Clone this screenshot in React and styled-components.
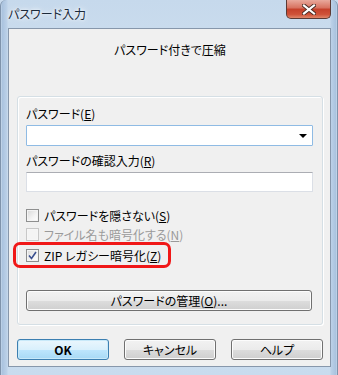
import React from 'react';
import styled, { createGlobalStyle } from 'styled-components';

const Global = createGlobalStyle`
  html, body { margin: 0; padding: 0; background: #c9dbee; }
  body {
    font-family: "Noto Sans CJK JP", "Noto Sans", sans-serif;
    font-size: 12px;
    font-feature-settings: "palt";
    color: #000;
  }
`;

function Checkbox({ checked, disabled }) {
  return (
    <Box disabled={disabled}>
      {checked && (
        <svg width="9" height="9" viewBox="0 0 9 9">
          <path d="M1 4.5 L3.5 7.5 L8 1" fill="none" stroke="#3a4f8f" strokeWidth="1.6" />
        </svg>
      )}
    </Box>
  );
}

export default function App() {
  return (
    <>
      <Global />
      <Window>
        <TitleBar>
          <Title>パスワード入力</Title>
          <CloseButton>
            <svg width="14" height="11" viewBox="0 0 14 11">
              <path d="M2 1.5 L12 9.5 M12 1.5 L2 9.5" stroke="#4a2a22" strokeWidth="4" strokeLinecap="square" />
              <path d="M2 1.5 L12 9.5 M12 1.5 L2 9.5" stroke="#fff" strokeWidth="2.2" strokeLinecap="square" />
            </svg>
          </CloseButton>
        </TitleBar>
        <Client>
          <Heading>パスワード付きで圧縮</Heading>
          <Group>
            <Label>パスワード(<u>E</u>)</Label>
            <Combo>
              <Arrow />
            </Combo>
            <Label top={7}>パスワードの確認入力(<u>R</u>)</Label>
            <Field />
            <CheckRow top={14}>
              <Checkbox />
              <span>パスワードを隠さない(<u>S</u>)</span>
            </CheckRow>
            <CheckRow top={1} disabled>
              <Checkbox disabled />
              <span>ファイル名も暗号化する(<u>N</u>)</span>
            </CheckRow>
            <CheckRow top={3}>
              <Highlight />
              <Checkbox checked />
              <span>ZIP レガシー暗号化(<u>Z</u>)</span>
            </CheckRow>
            <WideButton>パスワードの管理(<u>O</u>)...</WideButton>
          </Group>
          <ButtonBar>
            <Button primary>OK</Button>
            <Button>キャンセル</Button>
            <Button>ヘルプ</Button>
          </ButtonBar>
        </Client>
      </Window>
    </>
  );
}

const Window = styled.div`
  width: 338px;
  height: 375px;
  box-sizing: border-box;
  padding: 0 6px 0 7px;
  border-left: 1px solid #7f93ab;
  border-right: 1px solid #7f93ab;
  border-radius: 6px 6px 0 0;
  background:
    linear-gradient(90deg, transparent 0, #a9c2de 1px, #bcd1e8 6px, transparent 7px),
    linear-gradient(270deg, transparent 0, #a9c2de 1px, #bcd1e8 6px, transparent 7px),
    linear-gradient(180deg, #c6d9ec 0, #d6e4f1 40%, #c8dbee 100%);
  display: flex;
  flex-direction: column;
`;

const TitleBar = styled.div`
  height: 28px;
  display: flex;
  align-items: flex-start;
  justify-content: space-between;
`;

const Title = styled.div`
  margin-top: 6px;
  line-height: 16px;
  font-size: 12px;
  color: #1b2a3a;
  text-shadow: 0 0 6px #fff, 0 0 3px #fff;
`;

const CloseButton = styled.div`
  width: 45px;
  height: 19px;
  box-sizing: border-box;
  border: 1px solid #5c3a34;
  border-top: none;
  border-radius: 0 0 5px 5px;
  background: linear-gradient(180deg, #e9a99c 0, #d7705d 45%, #c5402a 50%, #cf5238 80%, #e0866a 100%);
  display: flex;
  align-items: center;
  justify-content: center;
`;

const Client = styled.div`
  flex: 1;
  margin-bottom: 8px;
  border: 1px solid #8797ab;
  background: #f0f0f0;
  padding: 0 7px 0 8px;
  display: flex;
  flex-direction: column;
`;

const Heading = styled.div`
  text-align: center;
  line-height: 16px;
  padding-top: 13px;
  height: 53px;
  box-sizing: border-box;
  margin-bottom: 14px;
`;

const Group = styled.div`
  border: 1px solid #d5dfe5;
  box-shadow: inset 1px 1px 0 #fff, 1px 1px 0 #fff;
  border-radius: 3px;
  padding: 9px 9px 13px 8px;
  display: flex;
  flex-direction: column;
`;

const Label = styled.div`
  line-height: 16px;
  margin-top: ${p => p.top || 0}px;
  margin-bottom: 3px;
  u { text-underline-offset: 1px; }
`;

const Combo = styled.div`
  height: 21px;
  box-sizing: border-box;
  border: 1px solid #8fbbe4;
  background: #fff;
  border-radius: 1px;
  display: flex;
  align-items: center;
  justify-content: flex-end;
  padding-right: 5px;
`;

const Arrow = styled.div`
  width: 0;
  height: 0;
  border-left: 4px solid transparent;
  border-right: 4px solid transparent;
  border-top: 4px solid #000;
`;

const Field = styled.div`
  height: 20px;
  box-sizing: border-box;
  border: 1px solid #dbdfe6;
  border-top-color: #abadb3;
  background: #fff;
`;

const CheckRow = styled.div`
  position: relative;
  align-self: flex-start;
  display: flex;
  align-items: center;
  gap: 3px;
  height: 18px;
  margin-top: ${p => p.top || 0}px;
  color: ${p => (p.disabled ? '#9a9a9a' : '#000')};
  u { text-underline-offset: 1px; }
`;

const Box = styled.div`
  width: 13px;
  height: 13px;
  box-sizing: border-box;
  border: 1px solid ${p => (p.disabled ? '#c8c8c8' : '#8e8f8f')};
  background: ${p => (p.disabled ? '#f4f4f4' : 'linear-gradient(135deg, #d8d8d8 0, #f4f4f4 60%, #fff 100%)')};
  box-shadow: inset 0 0 0 1px ${p => (p.disabled ? '#f6f6f6' : '#f4f4f4')};
  display: flex;
  align-items: center;
  justify-content: center;
  margin-right: 2px;
`;

const Highlight = styled.div`
  position: absolute;
  left: -13px;
  right: -10px;
  top: -4px;
  bottom: -4px;
  border: 3px solid #f01818;
  border-radius: 7px;
`;

const Button = styled.div`
  width: 92px;
  height: 21px;
  box-sizing: border-box;
  border: 1px solid ${p => (p.primary ? '#3c7fb1' : '#707070')};
  border-radius: 3px;
  background: ${p =>
    p.primary
      ? 'linear-gradient(180deg, #eaf6fd 0, #d9f0fc 50%, #bee6fd 51%, #a7d9f5 100%)'
      : 'linear-gradient(180deg, #f2f2f2 0, #ebebeb 50%, #dddddd 51%, #cfcfcf 100%)'};
  box-shadow: inset 0 0 0 1px ${p => (p.primary ? '#c8e9f9' : '#fcfcfc')};
  display: flex;
  align-items: center;
  justify-content: center;
  line-height: 16px;
  font-weight: ${p => (p.primary ? 600 : 400)};
  u { text-underline-offset: 1px; }
`;

const WideButton = styled(Button)`
  width: auto;
  height: 21px;
  margin-top: 26px;
  margin-right: 1px;
`;

const ButtonBar = styled.div`
  display: flex;
  justify-content: space-between;
  margin-top: 14px;
`;
